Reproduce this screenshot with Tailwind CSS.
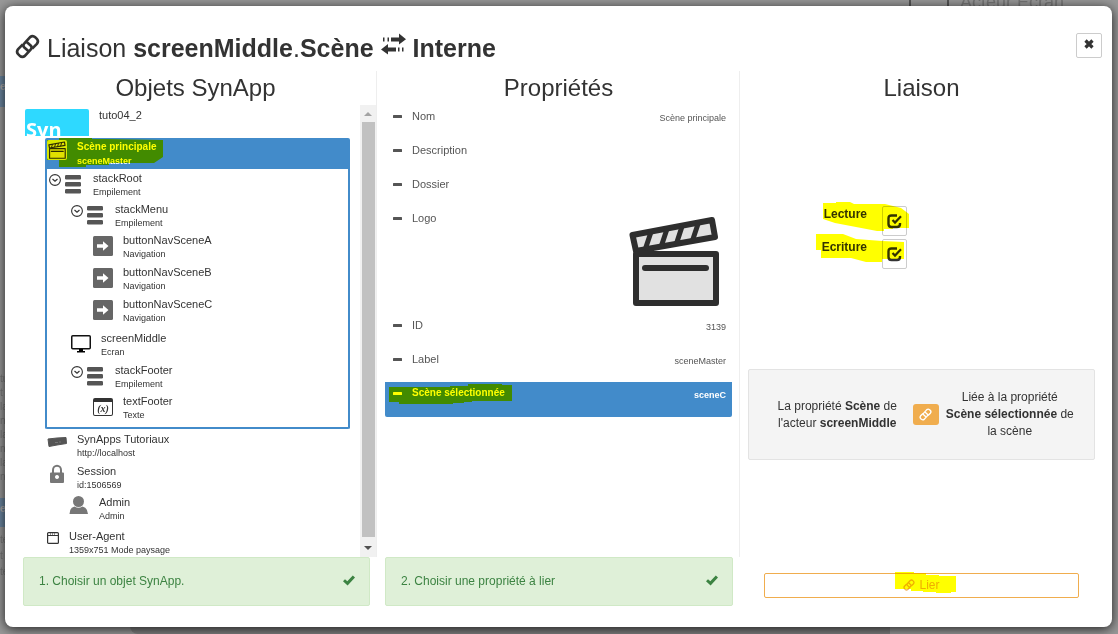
<!DOCTYPE html>
<html lang="fr">
<head>
<meta charset="utf-8">
<title>Liaison</title>
<script src="https://cdn.jsdelivr.net/npm/@tailwindcss/browser@4"></script>
</head>
<body class="relative h-screen overflow-hidden bg-[#999] font-['Liberation_Sans',Arial,sans-serif] text-[#333]">

<svg class="hidden">
  <symbol id="link" viewBox="0 0 24 24"><g fill="none" stroke="currentColor" stroke-width="2.600" stroke-linejoin="round"><path d="M13 16.500 9 13Q7 11 9 9L14.500 3Q17 1 19.500 3.200L21 4.700Q23 7 21 9.500L16.500 14"/><path d="M11 7.500 15 11Q17 13 15 15L9.500 21Q7 23 4.500 20.800L3 19.300Q1 17 3 14.500L7.500 10"/></g></symbol>
  <symbol id="tick" viewBox="0 0 12 11"><path fill="currentColor" d="M0 6.300 2 4.300 4.300 6.300 9.800 .5 12 2.500 4.600 10.500Z"/></symbol>
  <symbol id="minus" viewBox="0 0 9 4"><rect width="9" height="3" rx=".5" fill="currentColor"/></symbol>
  <symbol id="chev" viewBox="0 0 12 12"><circle cx="6" cy="6" r="5.400" fill="none" stroke="#333" stroke-width="1.100"/><path d="M3.500 5 6 7.300 8.500 5" fill="none" stroke="#333" stroke-width="1.200"/></symbol>
  <symbol id="stack" viewBox="0 0 16 19"><g fill="#555"><rect y="0" width="16" height="4.500" rx="1.200"/><rect y="7" width="16" height="4.500" rx="1.200"/><rect y="14" width="16" height="4.500" rx="1.200"/></g></symbol>
  <symbol id="nav" viewBox="0 0 20 20"><rect width="20" height="20" rx="1.500" fill="#666"/><path fill="#fff" d="M4 8.300h6V5.200L15.500 10 10 14.700V11.700H4Z"/></symbol>
  <symbol id="check" viewBox="0 0 16 16"><path d="M10 2.500H4.500Q1.500 2.500 1.500 5.500V11Q1.500 14 4.500 14H10Q13 14 13 11V10" fill="none" stroke="#333" stroke-width="2.400"/><path d="M5.500 7 8 9.600 14 3.300" fill="none" stroke="#333" stroke-width="2.200"/></symbol>
  <symbol id="clap" viewBox="0 0 92 92"><g stroke="#2e2e2e" stroke-linejoin="round"><path fill="#e1e1e1" stroke-width="6" d="M4.500 20 84 5 87 22 8 36Z"/><path fill="none" stroke-width="5" d="M23 17 17 35M39 14 33 32M54 11.500 48 30M70 9 64 27"/><path fill="#e1e1e1" stroke-width="6" d="M8 39H88V88H8Z"/><path fill="none" stroke-width="6" stroke-linecap="round" d="M17 53H78"/></g></symbol>
</svg>

<!-- Page behind the dialog -->
<div class="absolute inset-0 overflow-hidden text-[#777]" aria-hidden="true">
  <div class="absolute left-[909px] top-0 h-10 w-[40px] border-x-2 border-[#555]"></div>
  <p class="absolute -top-[10px] left-[960px] text-lg leading-6">Acteur Ecran</p>
  <div class="absolute left-0 top-[76px] h-[31px] w-6 bg-[#6b86a0] text-[11px] font-bold leading-5 text-[#aaa]">e</div>
  <div class="absolute left-0 top-[498px] h-[29px] w-6 bg-[#6b86a0] text-[11px] font-bold leading-5 text-[#aaa]">e</div>
  <p class="absolute left-0 top-[372px] text-[10px] leading-[14px]">tu<br>t<br>la<br>n<br>la<br>n<br>la<br>n</p>
  <p class="absolute left-0 top-[532px] text-[10px] leading-4">te<br>t<br>te</p>
  <div class="absolute bottom-0 left-[130px] h-2 w-[760px] rounded-bl-lg bg-[#808080]"></div>
</div>

<main role="dialog" aria-labelledby="title" class="absolute bottom-[7px] left-[5px] right-[6px] top-[6px] flex flex-col rounded-lg bg-white pl-[10px] pr-[9px] shadow-[0_2px_12px_rgba(0,0,0,0.8)]">
  <header class="flex h-[65px] shrink-0 items-start justify-between pr-px pt-[27px]">
    <h1 id="title" class="flex items-center gap-[7px] text-[25px] leading-[30px]">
      <svg class="-mt-1 size-[25px]"><use href="#link"/></svg>
      <span>Liaison <b>screenMiddle</b>.<b>Scène</b></span>
      <svg class="-mt-2 h-[22px] w-[25px]" viewBox="0 0 25 22" fill="#333"><path d="M10 4.500H18V.5L25 6.200 18 11.500V8.500H10ZM6.500 4.500H8V8.500H6.500ZM2 4.500H3.500V8.500H2ZM15 18.500H7V21.500L0 16.500 7 11V14.500H15ZM17 14.500H18.500V18.500H17ZM21 14.500H22.500V18.500H21Z"/></svg>
      <b>Interne</b>
    </h1>
    <button aria-label="Fermer" class="flex h-[25px] w-[26px] items-center justify-center rounded-xs border border-[#ccc]">
      <svg class="-mt-1 size-[10px]" viewBox="0 0 10 10"><path d="M1.500 1.500 8.500 8.500M8.500 1.500 1.500 8.500" stroke="#333" stroke-width="3.200"/></svg>
    </button>
  </header>

  <div class="grid min-h-0 flex-1 grid-cols-[362fr_363fr_363fr]">
    <section class="flex min-h-0 flex-col border-r border-[#eee]">
      <h2 class="text-center text-2xl leading-[34px]">Objets SynApp</h2>
      <div class="flex min-h-0 flex-1 pl-2">
        <div class="flex-1 overflow-hidden text-[11px] leading-[14px]">
          <div class="flex h-[33px] items-start gap-[10px] pl-[2px] pt-[3px]">
            <div class="mt-px h-[27px] w-16 overflow-hidden rounded-t-xs bg-[#2ed9ff] pl-px pt-[9px] font-['Open_Sans',sans-serif] text-xl font-bold leading-6 text-white">Syn</div>
            <span>tuto04_2</span>
          </div>
          <ul class="pl-[22px] pr-[10px]">
            <li class="rounded-xs border-2 border-t-0 border-[#428bca]">
              <div class="relative flex h-[31px] gap-[10px] bg-[#428bca] pt-[2px] text-white">
                <div class="h-5 w-5 rounded-xs bg-white/80 p-px"><svg class="size-[18px]"><use href="#clap"/></svg></div>
                <div class="text-[10px] font-bold">Scène principale<div class="text-[9px]">sceneMaster</div></div>
                <svg class="absolute left-0 top-0 h-[29px] w-[117px] mix-blend-multiply" viewBox="0 0 117 29"><path fill="#ff0" d="M0 2H12V0H45V1H60L116 2V19L107 25H62V27H39V29H12V22H0Z"/></svg>
              </div>
              <ul class="pt-[2px]">
                <li class="flex h-[31px] pl-[2px]"><svg class="mr-1 mt-[3px] size-3"><use href="#chev"/></svg><svg class="mr-3 mt-1 h-[19px] w-4"><use href="#stack"/></svg><div>stackRoot<div class="text-[9px] leading-[15px]">Empilement</div></div></li>
                <li class="flex h-[31px] pl-6"><svg class="mr-1 mt-[3px] size-3"><use href="#chev"/></svg><svg class="mr-3 mt-1 h-[19px] w-4"><use href="#stack"/></svg><div>stackMenu<div class="text-[9px] leading-[15px]">Empilement</div></div></li>
                <li class="flex h-8 gap-[10px] pl-[46px]"><svg class="mt-[3px] size-5"><use href="#nav"/></svg><div>buttonNavSceneA<div class="text-[9px] leading-[15px]">Navigation</div></div></li>
                <li class="flex h-8 gap-[10px] pl-[46px]"><svg class="mt-[3px] size-5"><use href="#nav"/></svg><div>buttonNavSceneB<div class="text-[9px] leading-[15px]">Navigation</div></div></li>
                <li class="flex h-[34px] gap-[10px] pl-[46px]"><svg class="mt-[3px] size-5"><use href="#nav"/></svg><div>buttonNavSceneC<div class="text-[9px] leading-[15px]">Navigation</div></div></li>
                <li class="flex h-8 gap-[10px] pl-6"><svg class="mt-[3px] size-5" viewBox="0 0 20 20"><rect x=".75" y="1.750" width="18.500" height="13" rx="1" fill="none" stroke="#111" stroke-width="1.500"/><path d="M8 15h4v2h2v1.500H6V17h2Z"/></svg><div>screenMiddle<div class="text-[9px] leading-[15px]">Ecran</div></div></li>
                <li class="flex h-[31px] pl-6"><svg class="mr-1 mt-[3px] size-3"><use href="#chev"/></svg><svg class="mr-3 mt-1 h-[19px] w-4"><use href="#stack"/></svg><div>stackFooter<div class="text-[9px] leading-[15px]">Empilement</div></div></li>
                <li class="flex h-[33px] gap-[10px] pl-[46px]"><span class="mt-1 flex h-[18px] w-5 items-center justify-center rounded-xs border border-t-4 border-[#333] font-['Liberation_Serif',serif] text-[10px] font-bold italic leading-3">(x)</span><div>textFooter<div class="text-[9px] leading-[15px]">Texte</div></div></li>
              </ul>
            </li>
            <li class="mt-[3px] flex h-8 gap-[10px] pl-[2px]"><svg class="size-5" viewBox="0 0 20 20"><path fill="#555" stroke="#555" stroke-linejoin="round" d="M1 7 10 6 19 5.500 19.500 11.500 10 13 2 14.500Z"/><path d="M8 10.500h3M12 10h2" stroke="#777"/></svg><div>SynApps Tutoriaux<div class="text-[9px] leading-[15px]">http://localhost</div></div></li>
            <li class="flex h-[31px] gap-[10px] pl-[2px]"><svg class="size-5" viewBox="0 0 20 20"><path d="M6 9V6a4 4.300 0 0 1 8 0V9" fill="none" stroke="#777" stroke-width="2"/><path fill="#777" fill-rule="evenodd" d="M4 8.500H16Q17 8.500 17 9.500V18Q17 19 16 19H4Q3 19 3 18V9.500Q3 8.500 4 8.500ZM10 11a2 2 0 1 0 .01 0Z"/></svg><div>Session<div class="text-[9px] leading-[15px]">id:1506569</div></div></li>
            <li class="flex h-[34px] gap-[10px] pl-6"><svg class="size-5" viewBox="0 0 20 20" fill="#777"><circle cx="9.500" cy="6.500" r="5.500"/><path d="M.5 19Q.5 12.500 5.500 11.500Q9.500 14 13.500 11.500Q18.500 12.500 19 19Z"/></svg><div>Admin<div class="text-[9px] leading-[15px]">Admin</div></div></li>
            <li class="flex h-8 gap-[10px] pl-[2px]"><svg class="mt-[3px] size-3" viewBox="0 0 12 12"><rect x=".6" y=".6" width="10.800" height="10.800" rx="1" fill="none" stroke="#333" stroke-width="1.200"/><path d="M1 3.500H11" stroke="#333"/><path d="M3 2h1M5 2h1M7 2h1" stroke="#333"/></svg><div>User-Agent<div class="text-[9px] leading-[14px]">1359x751 Mode paysage</div></div></li>
          </ul>
        </div>
        <div class="flex w-4 flex-col items-center bg-[#f1f1f1]" aria-hidden="true">
          <svg class="h-[17px] w-4" viewBox="0 0 16 17"><path fill="#a3a3a3" d="M4 11 8 7 12 11Z"/></svg>
          <div class="w-[13px] flex-1 bg-[#c1c1c1]"></div>
          <svg class="h-5 w-4" viewBox="0 0 16 20"><path fill="#505050" d="M4 9H12L8 13Z"/></svg>
        </div>
      </div>
    </section>

    <section class="border-r border-[#eee] px-2 pr-[7px]">
      <h2 class="text-center text-2xl leading-[34px]">Propriétés</h2>
      <ul class="text-[11px] leading-[14px] text-[#555]">
        <li class="flex h-[34px] items-start gap-[10px] pl-2 pr-[6px] pt-1"><svg class="mt-[6px] h-1 w-[9px]"><use href="#minus"/></svg>Nom<span class="ml-auto pt-[2px] text-[9px]">Scène principale</span></li>
        <li class="flex h-[34px] items-start gap-[10px] pl-2 pt-1"><svg class="mt-[6px] h-1 w-[9px]"><use href="#minus"/></svg>Description</li>
        <li class="flex h-[34px] items-start gap-[10px] pl-2 pt-1"><svg class="mt-[6px] h-1 w-[9px]"><use href="#minus"/></svg>Dossier</li>
        <li class="flex h-[107px] items-start gap-[10px] pl-2 pr-3 pt-1"><svg class="mt-[6px] h-1 w-[9px]"><use href="#minus"/></svg>Logo<svg class="ml-auto mt-1 size-[92px]"><use href="#clap"/></svg></li>
        <li class="flex h-[34px] items-start gap-[10px] pl-2 pr-[6px] pt-1"><svg class="mt-[6px] h-1 w-[9px]"><use href="#minus"/></svg>ID<span class="ml-auto pt-[2px] text-[9px]">3139</span></li>
        <li class="flex h-[34px] items-start gap-[10px] pl-2 pr-[6px] pt-1"><svg class="mt-[6px] h-1 w-[9px]"><use href="#minus"/></svg>Label<span class="ml-auto pt-[2px] text-[9px]">sceneMaster</span></li>
        <li class="relative flex h-[35px] items-start gap-[10px] rounded-b-xs bg-[#428bca] pl-2 pr-[6px] pt-1 text-[10px] font-bold text-white"><svg class="mt-[6px] h-1 w-[9px]"><use href="#minus"/></svg>Scène sélectionnée<span class="ml-auto pt-[2px] text-[9px]">sceneC</span>
          <svg class="absolute left-1 top-[2px] h-5 w-[123px] mix-blend-multiply" viewBox="0 0 123 20"><path fill="#ff0" d="M0 3H61V2H79V0H113V1H123V17H83V18H75V19H64V20H10V18H0Z"/></svg>
        </li>
      </ul>
    </section>

    <section class="flex flex-col">
      <h2 class="text-center text-2xl leading-[34px]">Liaison</h2>
      <div class="mt-[101px] flex flex-col gap-[3px] text-xs font-bold leading-4">
        <label class="relative grid grid-cols-[35%_1fr] gap-[15px]"><span class="text-right">Lecture</span>
          <span class="flex h-[30px] w-[25px] items-center justify-center rounded-xs border border-[#ccc]"><input type="checkbox" checked class="sr-only"><svg class="size-4"><use href="#check"/></svg></span>
          <svg class="absolute -top-[4px] left-[83px] h-[29px] w-[86px] mix-blend-multiply" viewBox="0 0 86 29"><path fill="#ff0" d="M0 1H13V0H27L31 2H62L78 6L86 12V26H70V27H61V29H54L12 21L0 17Z"/></svg></label>
        <label class="relative grid grid-cols-[35%_1fr] gap-[15px]"><span class="text-right">Ecriture</span>
          <span class="flex h-[30px] w-[25px] items-center justify-center rounded-xs border border-[#ccc]"><input type="checkbox" checked class="sr-only"><svg class="size-4"><use href="#check"/></svg></span>
          <svg class="absolute -top-[5px] left-[76px] h-7 w-[88px] mix-blend-multiply" viewBox="0 0 88 28"><path fill="#ff0" d="M0 0H27L40 5L66 7L88 8V25H66V28H50L35 24H5V16H0Z"/></svg></label>
      </div>
      <div class="mx-2 mt-[100px] grid h-[91px] grid-cols-[150fr_26px_142fr] items-center rounded-xs border border-[#e3e3e3] bg-[#f4f4f4] px-[13px] text-center text-xs leading-[17px]">
        <p>La propriété <b>Scène</b> de l'acteur <b>screenMiddle</b></p>
        <span class="flex h-[21px] items-center justify-center rounded-[3px] bg-[#f0ad4e] text-white"><svg class="size-[13px]"><use href="#link"/></svg></span>
        <p class="px-[6px]">Liée à la propriété <b>Scène sélectionnée</b> de la scène</p>
      </div>
    </section>
  </div>

  <footer class="grid h-[70px] shrink-0 grid-cols-[362fr_363fr_363fr] items-start text-xs">
    <div class="ml-2 mr-[7px] flex h-[49px] items-center justify-between rounded-xs border border-[#d0e9c6] bg-[#dff0d8] pb-[2px] pl-[15px] pr-[14px] text-[#3c8342]"><span>1. Choisir un objet SynApp.</span><svg class="h-[11px] w-3"><use href="#tick"/></svg></div>
    <div class="ml-2 mr-[7px] flex h-[49px] items-center justify-between rounded-xs border border-[#d0e9c6] bg-[#dff0d8] pb-[2px] pl-[15px] pr-[14px] text-[#3c8342]"><span>2. Choisir une propriété à lier</span><svg class="h-[11px] w-3"><use href="#tick"/></svg></div>
    <button class="relative mx-6 mt-4 flex h-[25px] items-center justify-center gap-1 rounded-xs border border-[#f0ad4e] pb-[2px] text-[#f0ad4e]"><svg class="size-3"><use href="#link"/></svg>Lier
      <svg class="absolute -top-[2px] left-1/2 -ml-[27px] h-[21px] w-[61px] mix-blend-multiply" viewBox="0 0 61 21"><path fill="#ff0" d="M0 0H19V1H31V3H44V4H61V20H56V21H41V20H28V19H16V17H0Z"/></svg></button>
  </footer>
</main>
</body>
</html>
